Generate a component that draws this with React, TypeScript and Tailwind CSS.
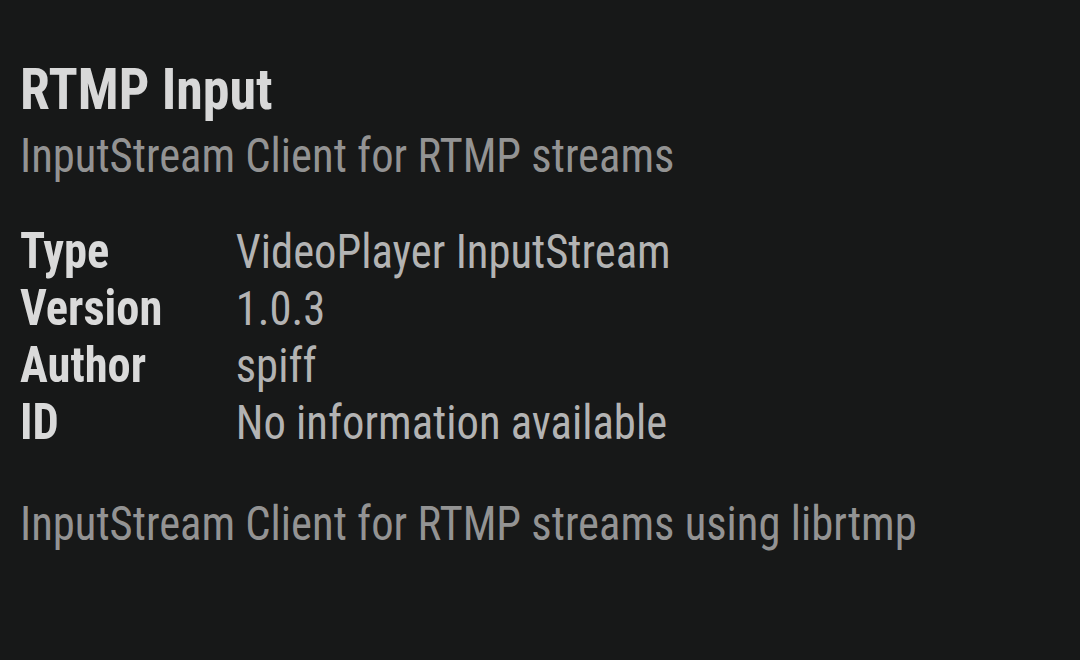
const rows: [string, string][] = [
  ["Type", "VideoPlayer InputStream"],
  ["Version", "1.0.3"],
  ["Author", "spiff"],
  ["ID", "No information available"],
];

// Kodi-style add-on info panel; text is tall and narrow, so the block is squeezed horizontally.
export default function App() {
  return (
    <div
      className="h-[660px] w-[1080px] overflow-hidden bg-[#171818] px-5 pt-[56px] [font-stretch:condensed]"
      style={{ fontFamily: "'Roboto Condensed', Roboto, 'Liberation Sans', sans-serif" }}
    >
      <div className="w-[1100px] origin-left scale-x-[0.93]">
        <h1 className="text-[58px] leading-[66px] font-bold text-[#d8d8d8]">RTMP Input</h1>
        <p className="mt-[6px] text-[48px] leading-[56px] text-[#939393]">InputStream Client for RTMP streams</p>
        <div className="mt-[39px] grid grid-cols-[232px_1fr] items-baseline">
          {rows.map(([k, v]) => (
            <div key={k} className="contents">
              <div className="text-[50px] leading-[57px] font-bold text-[#dadada]">{k}</div>
              <div className="text-[48px] leading-[57px] text-[#b3b3b3]">{v}</div>
            </div>
          ))}
        </div>
        <p className="mt-[45px] text-[48px] leading-[56px] text-[#939393]">
          InputStream Client for RTMP streams using librtmp
        </p>
      </div>
    </div>
  );
}
